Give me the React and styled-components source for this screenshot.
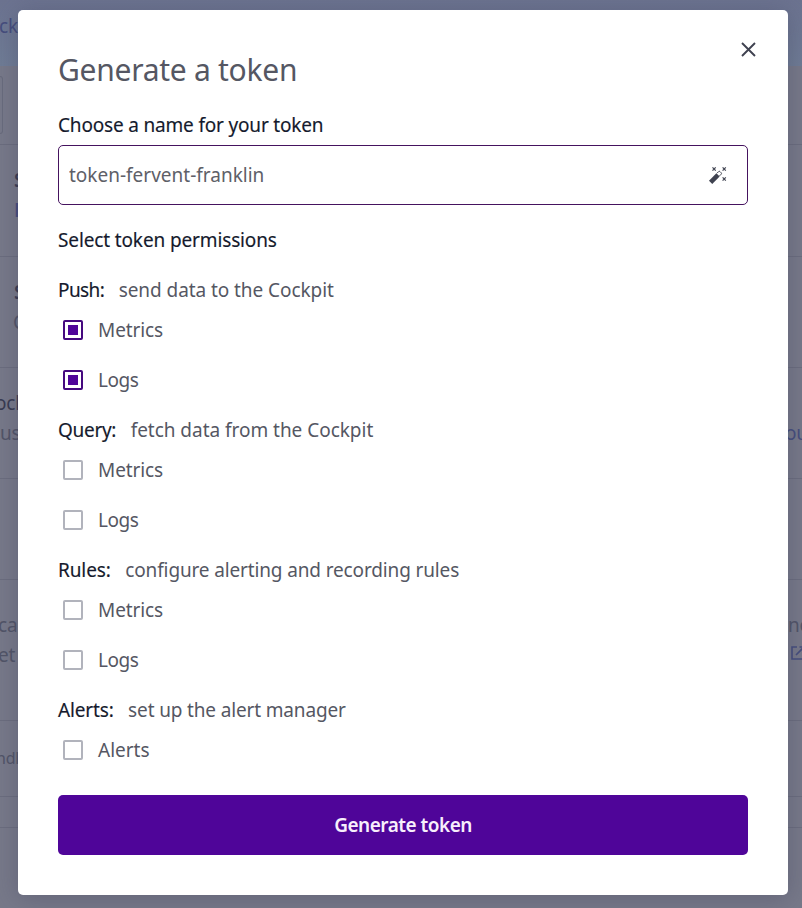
import React, { useState } from "react";
import styled, { createGlobalStyle } from "styled-components";

const GlobalStyle = createGlobalStyle`
  *, *::before, *::after { box-sizing: border-box; }
  body {
    margin: 0;
    overflow: hidden;
    font-family: "Noto Sans", "Open Sans", sans-serif;
    font-size: 19px;
    color: #555763;
  }
`;

const Shell = styled.div`
  position: relative;
  height: 908px;
  overflow: hidden;
`;

/* Dimmed page behind the dialog */

const Page = styled.div`
  display: flex;
  flex-direction: column;
  height: 100%;
  background: #777989;
  color: #515467;
`;

const Header = styled.div`
  display: flex;
  align-items: flex-start;
  height: 66px;
  padding-top: 11px;
  background: linear-gradient(#6c7390, #6f7c95);
`;

const SearchBar = styled.div`
  height: 79px;
  padding-top: 10px;
  border-bottom: 1px solid #6b6d7e;
`;

const SearchField = styled.div`
  width: 3px;
  height: 58px;
  border: 1px solid #686b7c;
  border-left: 0;
  border-radius: 0 4px 4px 0;
`;

const PageRow = styled.div`
  display: flex;
  justify-content: space-between;
  height: ${(p) => p.$height}px;
  padding-top: ${(p) => p.$top || 0}px;
  border-bottom: 1px solid #6b6d7e;
`;

const Column = styled.div`
  display: flex;
  flex-direction: column;
  width: ${(p) => p.$width || 18}px;
`;

const PageText = styled.span`
  flex: none;
  height: 30px;
  line-height: 30px;
  white-space: nowrap;
  letter-spacing: -0.2px;
  text-indent: ${(p) => p.$indent || 0}px;
  font-size: ${(p) => p.$size || 19}px;
  font-weight: ${(p) => (p.$bold ? 600 : 400)};
  color: ${(p) => (p.$link ? "#454d7d" : p.$strong ? "#383a50" : "inherit")};
`;

const LinkIcon = styled.svg`
  flex: none;
  margin: 6px 0 0 3px;
`;

/* Dialog */

const Overlay = styled.div`
  position: absolute;
  inset: 0;
  padding: 10px 14px 13px 18px;
`;

const Dialog = styled.section`
  display: flex;
  flex-direction: column;
  height: 100%;
  padding: 40px;
  border-radius: 5px;
  background: #fff;
  box-shadow: 0 3px 24px rgba(60, 62, 88, 0.36);
`;

const TitleBar = styled.header`
  display: flex;
  justify-content: space-between;
  height: 60px;
`;

const Title = styled.h1`
  margin: 0;
  font-size: 30px;
  font-weight: 400;
  line-height: 40px;
  letter-spacing: -0.27px;
`;

const CloseButton = styled.button`
  display: flex;
  align-items: center;
  justify-content: center;
  width: 31px;
  height: 31px;
  margin: -16px -16px 0 0;
  padding: 0;
  border: 0;
  background: none;
  color: #3f4250;
`;

const Label = styled.label`
  height: 30px;
  line-height: 30px;
  letter-spacing: ${(p) => p.$track}px;
  color: #151a2d;
  -webkit-text-stroke: 0.15px #151a2d;
`;

const Field = styled.div`
  display: flex;
  align-items: center;
  justify-content: space-between;
  height: 60px;
  margin: 5px 0 20px;
  padding: 0 19px 0 10px;
  border: 1px solid #45135f;
  border-radius: 5px;
`;

const Input = styled.input`
  flex: 1;
  min-width: 0;
  padding: 0;
  border: 0;
  outline: 0;
  background: none;
  font: inherit;
  color: #5e6068;
`;

const Permissions = styled.div`
  display: flex;
  flex-direction: column;
  gap: 10px;
  padding-top: 20px;
`;

const Group = styled.fieldset`
  display: flex;
  flex-direction: column;
  margin: 0;
  padding: 0;
  border: 0;
`;

const GroupHead = styled.div`
  display: flex;
  gap: 14.5px;
  height: 30px;
  line-height: 30px;
  white-space: nowrap;
`;

const Description = styled.span`
  letter-spacing: ${(p) => p.$track}px;
`;

const Option = styled.label`
  display: flex;
  align-items: center;
  gap: 15px;
  height: 50px;
  padding-left: 5px;
  letter-spacing: ${(p) => p.$track}px;
`;

const Box = styled.input`
  appearance: none;
  flex: none;
  width: 20px;
  height: 20px;
  margin: 0;
  padding: 3px;
  border: 2px solid ${(p) => (p.checked ? "#45097f" : "#b1b3bc")};
  border-radius: 2px;
  background: ${(p) => (p.checked ? "#4f0599" : "#fff")} content-box;
`;

const Submit = styled.button`
  height: 60px;
  margin-top: auto;
  border: 0;
  border-radius: 5px;
  background: #4f0599;
  color: #f8effc;
  font: inherit;
  font-weight: 600;
  letter-spacing: -0.5px;
`;

const groups = [
  {
    name: "Push:",
    track: -0.6,
    text: "send data to the Cockpit",
    textTrack: -0.07,
    options: [["Metrics", true], ["Logs", true]],
  },
  {
    name: "Query:",
    track: -0.3,
    text: "fetch data from the Cockpit",
    textTrack: -0.03,
    options: [["Metrics", false], ["Logs", false]],
  },
  {
    name: "Rules:",
    track: -0.1,
    text: "configure alerting and recording rules",
    textTrack: -0.14,
    options: [["Metrics", false], ["Logs", false]],
  },
  {
    name: "Alerts:",
    track: -0.15,
    text: "set up the alert manager",
    textTrack: -0.15,
    options: [["Alerts", false]],
  },
];

const optionTrack = { Metrics: -0.1, Logs: -0.5, Alerts: 0 };

function CloseIcon() {
  return (
    <svg width="17" height="17" viewBox="0 0 17 17" fill="none" stroke="currentColor" strokeWidth="1.9">
      <path d="M2 2 15 15M15 2 2 15" />
    </svg>
  );
}

function WandIcon() {
  return (
    <svg width="20" height="20" viewBox="0 0 20 20" fill="none" stroke="#3f4250">
      <path d="M2.6 17.3 10 9.9" strokeWidth="4.6" />
      <path d="m9 8.2 1.6-1.6q.7-.7 1.4 0l1.2 1.2q.7.7 0 1.4l-1.7 1.7" strokeWidth="1" />
      <path d="m4.5 2.4 3.2 3.2m0-3.2L4.5 5.6M14.6 2.4l3.2 3.2m0-3.2-3.2 3.2M14.6 12.4l3.2 3.2m0-3.2-3.2 3.2" strokeWidth="1.2" />
    </svg>
  );
}

function PermissionGroup({ group }) {
  const [checked, setChecked] = useState(group.options.map((o) => o[1]));
  const toggle = (i) => setChecked(checked.map((c, j) => (i === j ? !c : c)));
  return (
    <Group>
      <GroupHead>
        <Label as="span" $track={group.track}>{group.name}</Label>
        <Description $track={group.textTrack}>{group.text}</Description>
      </GroupHead>
      {group.options.map(([name], i) => (
        <Option key={name} $track={optionTrack[name]}>
          <Box type="checkbox" checked={checked[i]} onChange={() => toggle(i)} />
          {name}
        </Option>
      ))}
    </Group>
  );
}

export default function App() {
  const [name, setName] = useState("token-fervent-franklin");
  return (
    <Shell>
      <GlobalStyle />
      <Page aria-hidden="true">
        <Header><PageText $link $indent={-1}>ck</PageText></Header>
        <SearchBar><SearchField /></SearchBar>
        <PageRow $height={112} $top={20}>
          <Column>
            <PageText $bold $strong $indent={14}>S</PageText>
            <PageText $link $bold $indent={14}>L</PageText>
          </Column>
        </PageRow>
        <PageRow $height={111} $top={20}>
          <Column>
            <PageText $bold $strong $indent={14}>S</PageText>
            <PageText $indent={13}>C</PageText>
          </Column>
        </PageRow>
        <PageRow $height={111} $top={20}>
          <Column>
            <PageText $strong $indent={-5}>ock</PageText>
            <PageText>us</PageText>
          </Column>
          <Column $width={17}>
            <PageText />
            <PageText $link>ou</PageText>
          </Column>
        </PageRow>
        <PageRow $height={101} />
        <PageRow $height={141} $top={30}>
          <Column>
            <PageText $indent={-2}>ca</PageText>
            <PageText $indent={-2}>et</PageText>
          </Column>
          <Column $width={14}>
            <PageText>ne</PageText>
            <LinkIcon width="14" height="14" viewBox="0 0 14 14" fill="none" stroke="#454d7d" strokeWidth="1.6">
              <path d="M6 1H1v12h12V8M5 9l8-8M8.5 1H13v4.5" />
            </LinkIcon>
          </Column>
        </PageRow>
        <PageRow $height={76} $top={22}>
          <Column><PageText $size={16} $indent={-4}>ndl</PageText></Column>
        </PageRow>
        <PageRow $height={31} />
      </Page>
      <Overlay>
        <Dialog role="dialog">
          <TitleBar>
            <Title>Generate a token</Title>
            <CloseButton aria-label="Close"><CloseIcon /></CloseButton>
          </TitleBar>
          <Label htmlFor="token-name" $track={-0.18}>Choose a name for your token</Label>
          <Field>
            <Input id="token-name" value={name} onChange={(e) => setName(e.target.value)} />
            <WandIcon />
          </Field>
          <Label as="div" $track={-0.13}>Select token permissions</Label>
          <Permissions>
            {groups.map((g) => <PermissionGroup key={g.name} group={g} />)}
          </Permissions>
          <Submit type="button">Generate token</Submit>
        </Dialog>
      </Overlay>
    </Shell>
  );
}
